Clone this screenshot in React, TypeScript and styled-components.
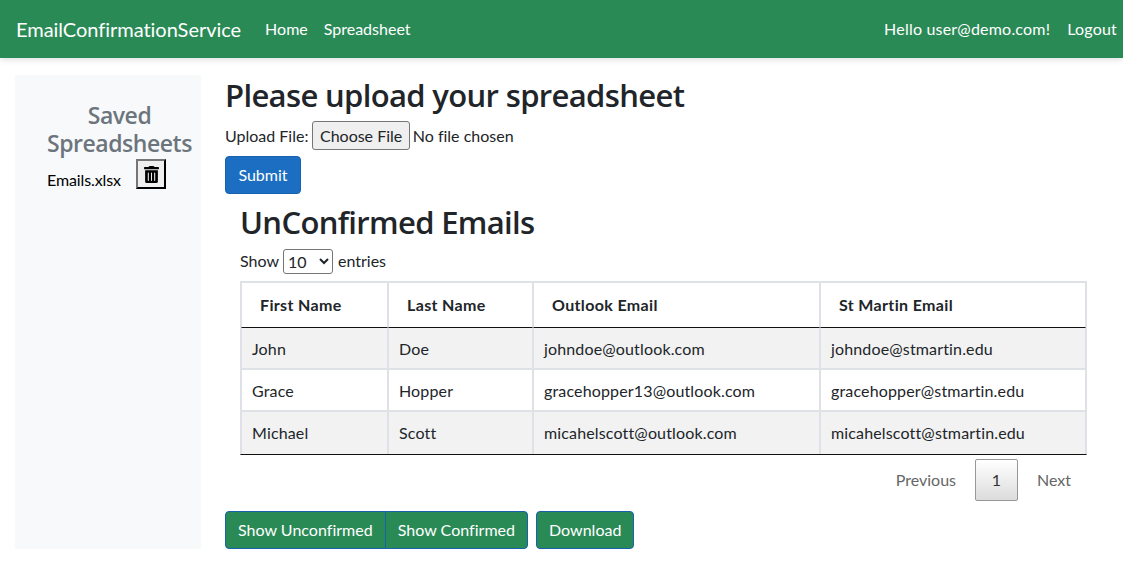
import React from "react";
import styled, { createGlobalStyle } from "styled-components";
import { FaTrashAlt } from "react-icons/fa";

const GlobalStyle = createGlobalStyle`
  * {
    box-sizing: border-box;
  }
  body {
    margin: 0;
    background: #fff;
    color: #212529;
    font-family: "Lato", "Open Sans", sans-serif;
    font-size: 16px;
    font-variant-ligatures: none;
    line-height: 24px;
  }
`;

const rows = [
  ["John", "Doe", "johndoe@outlook.com", "johndoe@stmartin.edu"],
  ["Grace", "Hopper", "gracehopper13@outlook.com", "gracehopper@stmartin.edu"],
  ["Michael", "Scott", "micahelscott@outlook.com", "micahelscott@stmartin.edu"],
];

const headers = ["First Name", "Last Name", "Outlook Email", "St Martin Email"];

const App: React.FC = () => {
  return (
    <>
      <GlobalStyle />
      <Navbar>
        <Brand>EmailConfirmationService</Brand>
        <NavLink>Home</NavLink>
        <NavLink>Spreadsheet</NavLink>
        <NavRight>
          <NavLink>Hello user@demo.com!</NavLink>
          <NavLink>Logout</NavLink>
        </NavRight>
      </Navbar>
      <Page>
        <Sidebar>
          <SideTitle>Saved Spreadsheets</SideTitle>
          <FileRow>
            <FileName>Emails.xlsx</FileName>
            <TrashButton type="button" aria-label="Delete">
              <FaTrashAlt size={17} color="#000" />
            </TrashButton>
          </FileRow>
        </Sidebar>
        <Main>
          <Title>Please upload your spreadsheet</Title>
          <UploadRow>
            Upload File:
            <ChooseFile type="button">Choose File</ChooseFile>
            No file chosen
          </UploadRow>
          <SubmitButton type="button">Submit</SubmitButton>
          <TableSection>
            <SectionTitle>UnConfirmed Emails</SectionTitle>
            <LengthRow>
              Show
              <LengthSelect defaultValue="10">
                <option>10</option>
                <option>25</option>
                <option>50</option>
              </LengthSelect>
              entries
            </LengthRow>
            <EmailTable>
              <colgroup>
                <col style={{ width: 147 }} />
                <col style={{ width: 145 }} />
                <col style={{ width: 287 }} />
                <col style={{ width: 266 }} />
              </colgroup>
              <thead>
                <tr>
                  {headers.map((h) => (
                    <HeadCell key={h}>{h}</HeadCell>
                  ))}
                </tr>
              </thead>
              <tbody>
                {rows.map((row, i) => (
                  <BodyRow key={row[0]} $odd={i % 2 === 0}>
                    {row.map((c) => (
                      <BodyCell key={c}>{c}</BodyCell>
                    ))}
                  </BodyRow>
                ))}
              </tbody>
            </EmailTable>
            <Pagination>
              <PageLink>Previous</PageLink>
              <CurrentPage>1</CurrentPage>
              <PageLink>Next</PageLink>
            </Pagination>
          </TableSection>
          <ActionRow>
            <ButtonGroup>
              <GreenButton type="button" $group="left">Show Unconfirmed</GreenButton>
              <GreenButton type="button" $group="right">Show Confirmed</GreenButton>
            </ButtonGroup>
            <GreenButton type="button">Download</GreenButton>
          </ActionRow>
        </Main>
      </Page>
    </>
  );
};

const Navbar = styled.nav`
  display: flex;
  align-items: center;
  height: 58px;
  padding: 0 0 0 16px;
  background: #2a8a56;
  color: #fff;
  box-shadow: 0 2px 6px rgba(0, 0, 0, 0.12);
`;

const Brand = styled.span`
  font-size: 20px;
  letter-spacing: -0.03px;
  margin-right: 16px;
`;

const NavLink = styled.span`
  padding: 0 8px;
  color: #fff;
`;

const NavRight = styled.div`
  display: flex;
  gap: 3px;
  margin-left: auto;

  ${NavLink} {
    padding: 0 6px 0 8px;
    letter-spacing: 0.2px;
  }
`;

const Page = styled.div`
  display: flex;
  align-items: flex-start;
  padding: 17px 0 0 15px;
`;

const Sidebar = styled.aside`
  flex: 0 0 186px;
  height: 474px;
  padding: 26px 0 0 32px;
  background: #f8f9fa;
`;

const SideTitle = styled.h5`
  margin: 0 0 2px;
  width: 145px;
  color: #6c757d;
  font-family: "Open Sans", sans-serif;
  font-size: 23px;
  font-weight: 600;
  letter-spacing: -0.45px;
  line-height: 28px;
  text-align: center;
`;

const FileRow = styled.div`
  display: flex;
  align-items: flex-start;
  gap: 15px;
`;

const FileName = styled.span`
  margin-top: 9px;
  color: #000;
  letter-spacing: -0.1px;
`;

const TrashButton = styled.button`
  display: flex;
  align-items: center;
  justify-content: center;
  width: 30px;
  height: 30px;
  padding: 0;
  background: #efefef;
  border: 2px outset #555;
  border-color: #767676 #222 #222 #767676;
`;

const Main = styled.main`
  flex: 0 0 862px;
  margin-left: 24px;
`;

const Title = styled.h2`
  margin: 1px 0 7px;
  font-family: "Open Sans", sans-serif;
  font-size: 31px;
  font-weight: 600;
  letter-spacing: -0.65px;
  line-height: 38px;
`;

const UploadRow = styled.div`
  display: flex;
  align-items: center;
  height: 29px;
`;

const ChooseFile = styled.button`
  height: 29px;
  margin: 0 3px 0 4px;
  padding: 0 6.5px;
  background: #efefef;
  border: 1px solid #767676;
  border-radius: 3px;
  color: #212529;
  font: inherit;
`;

const SubmitButton = styled.button`
  display: block;
  width: 76px;
  height: 38px;
  margin-top: 6px;
  padding: 0;
  background: #1b6ec2;
  border: 1px solid #1861ac;
  border-radius: 4px;
  color: #fff;
  font: inherit;
`;

const TableSection = styled.section`
  padding-left: 15px;
`;

const SectionTitle = styled.h2`
  margin: 0;
  padding-top: 9px;
  font-family: "Open Sans", sans-serif;
  font-size: 31px;
  font-weight: 600;
  letter-spacing: -0.65px;
  line-height: 38px;
`;

const LengthRow = styled.div`
  display: flex;
  align-items: center;
  gap: 4px;
  height: 24px;
  margin-top: 8px;
`;

const LengthSelect = styled.select`
  width: 50px;
  height: 25px;
  margin-right: 1px;
  padding: 0;
  background: #fff;
  border: 1px solid #767676;
  border-radius: 3px;
  color: #212529;
  font: inherit;
`;

const EmailTable = styled.table`
  width: 847px;
  margin-top: 8px;
  border-collapse: separate;
  border-spacing: 0;
  table-layout: fixed;
  border: 1px solid #dee2e6;
  border-bottom: 1px solid #111;
`;

const HeadCell = styled.th`
  height: 46px;
  padding: 0 18px;
  background: #fff;
  border: 1px solid #dee2e6;
  border-bottom: 1px solid #111;
  font-weight: 700;
  letter-spacing: 0.35px;
  text-align: left;
`;

const BodyRow = styled.tr<{ $odd: boolean }>`
  background: ${(p) => (p.$odd ? "#f2f2f2" : "#fff")};
`;

const BodyCell = styled.td`
  height: 42px;
  padding: 1px 10px 0;
  border: 1px solid #dee2e6;
  border-top: 0;
  border-bottom-width: 2px;
  letter-spacing: 0.15px;
  ${BodyRow}:last-child & {
    padding-top: 0;
    border-bottom: 0;
  }
`;

const Pagination = styled.div`
  display: flex;
  align-items: center;
  justify-content: flex-end;
  gap: 2px;
  height: 42px;
  margin-top: 4px;
`;

const PageLink = styled.span`
  padding: 0 17px;
  color: #666;
  &:last-child {
    padding-right: 16px;
  }
`;

const CurrentPage = styled.span`
  display: flex;
  align-items: center;
  justify-content: center;
  width: 43px;
  height: 42px;
  background: linear-gradient(to bottom, #fff 0%, #dcdcdc 100%);
  border: 1px solid #979797;
  border-radius: 2px;
  color: #333;
`;

const ActionRow = styled.div`
  display: flex;
  gap: 8px;
  margin-top: 10px;
`;

const ButtonGroup = styled.div`
  display: flex;
`;

const GreenButton = styled.button<{ $group?: "left" | "right" }>`
  height: 38px;
  padding: 0 12px;
  background: #2a8a56;
  border: 1px solid #1861ac;
  border-radius: ${(p) =>
    p.$group === "left" ? "4px 0 0 4px" : p.$group === "right" ? "0 4px 4px 0" : "4px"};
  margin-left: ${(p) => (p.$group === "right" ? "-1px" : "0")};
  color: #fff;
  font: inherit;
  letter-spacing: 0.02px;
`;

export default App;
